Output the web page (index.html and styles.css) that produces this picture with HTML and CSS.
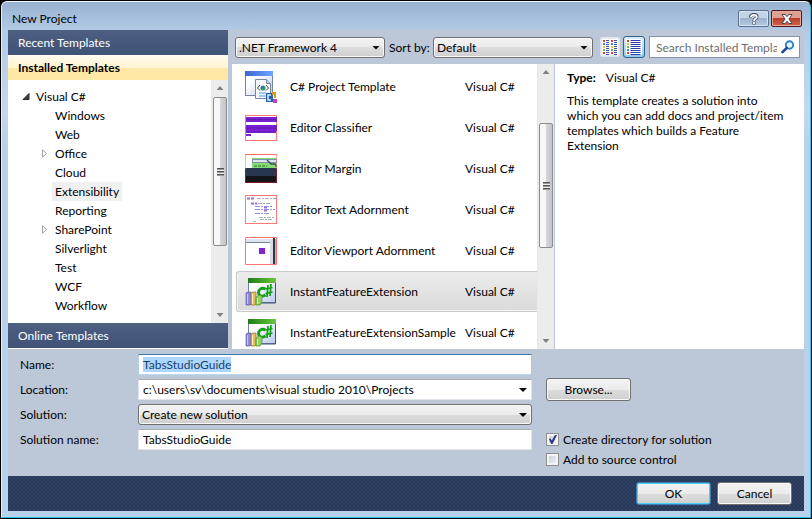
FILE: index.html
```html
<!DOCTYPE html>
<html lang="en">
<head>
<meta charset="utf-8">
<title>New Project</title>
<link rel="stylesheet" href="styles.css">
</head>
<body>
<svg width="0" height="0" class="defs" aria-hidden="true">
  <defs>
    <linearGradient id="sheet" x1="0" y1="0" x2="1" y2="1"><stop offset=".3" stop-color="#fff"/><stop offset="1" stop-color="#b9c9ee"/></linearGradient>
    <linearGradient id="blueBar" x1="0" x2="1"><stop offset="0" stop-color="#3a68cc"/><stop offset="1" stop-color="#6fa5ff"/></linearGradient>
    <linearGradient id="greenBar" x1="0" x2="1"><stop offset="0" stop-color="#1f7a1a"/><stop offset="1" stop-color="#69c83c"/></linearGradient>
    <symbol id="csharp" viewBox="0 0 32 32">
      <rect x="3.500" y="2.500" width="27" height="24" fill="url(#sheet)" stroke="#6f83a6"/>
      <path d="M30.500 3v24H6" fill="none" stroke="#3f5273"/>
      <rect x="3" y="2" width="28" height="5" fill="url(#greenBar)"/>
      <path d="M20.500 13c-4-2-7 .5-7 3.500s3 5 7 2.500" fill="none" stroke="#12a012" stroke-width="2.800"/>
      <path d="M23 9l-1 12M26 8l-1 12M20.500 13l7-1.500M20.500 17.500l7-1.500" fill="none" stroke="#12a012" stroke-width="1.700"/>
      <path d="M1 17l2-1h3v12l-1 1H1z" fill="#8d8be0" stroke="#5655a8" stroke-width=".7"/>
      <path d="M2.500 18v10" stroke="#c5c4fa"/>
      <path d="M6 17l2-1h3v12l-1 1H6z" fill="#e5bd59" stroke="#987126" stroke-width=".7"/>
      <path d="M7.500 18v10" stroke="#ffecb0"/>
      <path d="M11 21l3-2 3 1v6l-2 3h-4z" fill="#91d265" stroke="#488e2d" stroke-width=".7"/>
      <path d="M12.500 22v6" stroke="#d3f5b6"/>
    </symbol>
  </defs>
</svg>
<main class="window">
  <header class="titlebar">
    <h1>New Project</h1>
    <button class="caption" type="button" aria-label="Help"><svg width="12" height="12" viewBox="0 0 12 12"><path d="M2.500 4.500V3.200Q3 1.500 6 1.500t3 2.200Q9 5 7.500 5.600 6 6.200 6 8M6 8.500v3" fill="none" stroke="#40506a" stroke-width="3.200"/><path d="M3 4V3.200Q3.400 1.800 6 1.800t2.800 1.900Q8.800 5 7.500 5.600 6 6.200 6 8M6 9v2" fill="none" stroke="#fff" stroke-width="1.800"/></svg></button>
    <button class="caption close" type="button" aria-label="Close"><svg width="12" height="10" viewBox="0 0 12 10"><path d="M1 .5h3.200L6 2.700 7.800.5H11L8 5l3 4.500H7.800L6 7.300 4.200 9.500H1L4 5z" fill="#fff" stroke="#48454f"/></svg></button>
  </header>

  <div class="client">
    <div class="upper">
      <nav class="side">
        <button class="band" type="button">Recent Templates</button>
        <button class="band current" type="button">Installed Templates</button>
        <div class="treebox">
          <ul class="tree">
            <li class="root"><svg width="7" height="7" viewBox="0 0 7 7"><path d="M6.500.5v6h-6z" fill="#404040" stroke="#262626"/></svg><span>Visual C#</span></li>
            <li><span>Windows</span></li>
            <li><span>Web</span></li>
            <li><svg width="7" height="9" viewBox="0 0 7 9"><path d="M1 .8l4 3.700-4 3.700z" fill="#fff" stroke="#a5a5a5"/></svg><span>Office</span></li>
            <li><span>Cloud</span></li>
            <li><span class="picked">Extensibility</span></li>
            <li><span>Reporting</span></li>
            <li><svg width="7" height="9" viewBox="0 0 7 9"><path d="M1 .8l4 3.700-4 3.700z" fill="#fff" stroke="#a5a5a5"/></svg><span>SharePoint</span></li>
            <li><span>Silverlight</span></li>
            <li><span>Test</span></li>
            <li><span>WCF</span></li>
            <li><span>Workflow</span></li>
          </ul>
          <div class="scroll"><i class="up"></i><i class="thumb tree-thumb"></i><i class="down"></i></div>
        </div>
        <button class="band" type="button">Online Templates</button>
      </nav>

      <section class="browser">
        <div class="toolbar">
          <span class="drop framework"><select aria-label="Framework"><option>.NET Framework 4</option></select></span>
          <label for="sort">Sort by:</label>
          <span class="drop sort"><select id="sort"><option>Default</option></select></span>
          <button class="view" type="button" aria-label="Small icons"><svg width="16" height="16" viewBox="0 0 16 16"><path d="M0 0h7v16H0zM8 0h8v16H8z" fill="#fff"/><g stroke-width="2"><path d="M2 1v2M10 1v2M2 13v2M10 13v2" stroke="#e33b2d"/><path d="M2 4v2M10 4v2" stroke="#4a7fd0"/><path d="M2 7v2M10 7v2" stroke="#e8c825"/><path d="M2 10v2M10 10v2" stroke="#6ab93b"/></g><path d="M5.500 1v15M13.500 1v15" stroke="#3a4eae" stroke-width="3" stroke-dasharray="1 1"/></svg></button>
          <button class="view on" type="button" aria-label="Medium icons"><svg width="16" height="16" viewBox="0 0 16 16"><path d="M0 0h16v16H0z" fill="#fff"/><g stroke-width="2"><path d="M2 1v2M2 13v2" stroke="#e33b2d"/><path d="M2 4v2" stroke="#e8c825"/><path d="M2 7v2" stroke="#6ab93b"/><path d="M2 10v2" stroke="#4a7fd0"/></g><path d="M9.500 1v15" stroke="#2d3fae" stroke-width="10" stroke-dasharray="1 1"/></svg></button>
          <div class="search">
            <input type="text" placeholder="Search Installed Templates" aria-label="Search Installed Templates">
            <svg width="14" height="14" viewBox="0 0 14 14"><circle cx="8.500" cy="5" r="3.700" fill="#e9f5fd" stroke="#2a7fc4" stroke-width="1.900"/><path d="M5.700 8L1.500 12.200" stroke="#23479a" stroke-width="2.600" stroke-linecap="round"/></svg>
          </div>
        </div>
        <div class="panes">
          <ul class="templates">
            <li><svg width="32" height="32" viewBox="0 0 32 32"><rect x=".5" y=".5" width="27" height="24" fill="url(#sheet)" stroke="#7384a3"/><rect width="28" height="5" fill="url(#blueBar)"/><path d="M10.500 8.500h11l4 4v15h-15z" fill="#f7f9fd" stroke="#7886a0"/><path d="M21.500 8.500v4h4" fill="#ccd5e5" stroke="#7886a0"/><path d="M15 14l-2.500 3 2.500 2.500M21 14l2.500 3-2.500 2.500" fill="none" stroke="#444"/><circle cx="18" cy="17" r="2.600" fill="#379b72"/><path d="M16 16.500h3" stroke="#3967d2" stroke-width="2"/><path d="M14 22h7M14 25h7" stroke="#4e91e8"/><path d="M21 22h7v9h-7z" fill="#285fae"/><path d="M26 24h-3v5h3" fill="none" stroke="#d2f0ff" stroke-width="1.500"/><path d="M27 21h4v6h-2v-3h-2z" fill="#d69b19"/><rect x="28" y="28" width="4" height="4" fill="#c23fb8"/></svg><span>C# Project Template</span><span>Visual C#</span></li>
            <li><svg width="32" height="26" viewBox="0 0 32 26"><rect x=".5" y=".5" width="31" height="25" fill="#fff" stroke="#ff7878"/><path d="M1 2h31v5H1zM1 10h31v6H1zM1 16h30v2H1zM1 19h5v2H1z" fill="#7920d2"/><path d="M2 4.500h30M2 13h30M2 17h25" stroke="#5f18ac" stroke-dasharray="5 1 3 1"/></svg><span>Editor Classifier</span><span>Visual C#</span></li>
            <li><svg width="32" height="29" viewBox="0 0 32 29"><path fill="#fff" d="M0 0h32v15H0z"/><path fill="#7fdd72" d="M7 4h25v10H7z"/><path fill="#dce2ed" stroke="#8291a9" d="M7.500 5.500h24v3h-24z"/><path d="M9 12h13" stroke="#347530" stroke-dasharray="3 1"/><path d="M22 6l4 4h4l2 3" fill="none" stroke="#465161" stroke-width="1.500"/><path d="M0 14h32v8H0z" fill="#29364f"/><path d="M0 22h32v7H0z" fill="#131516"/><path d="M0 15V.5h32V15" fill="none" stroke="#ff6969"/><path d="M.5 15v13.500h31V15" fill="none" stroke="#801c29"/></svg><span>Editor Margin</span><span>Visual C#</span></li>
            <li><svg width="32" height="29" viewBox="0 0 32 29"><rect x=".5" y=".5" width="31" height="28" fill="#fff" stroke="#ff7878"/><g opacity=".75"><path d="M2 3.500h8M6 8.500h6M19 12.500h3M19 15.500h3" stroke="#803bcb" stroke-width="2" stroke-dasharray="3 1"/><path d="M12 3.500h19M13 8.500h12M14 22.500h15M15 24.500h13" stroke="#8d929d" stroke-dasharray="4 1 2 1"/><path d="M10 11.500h18M10 14.500h20M10 18.500h15" stroke="#6878d6" stroke-dasharray="5 1 2 1"/></g><path d="M8 26.500h3" stroke="#bbb"/></svg><span>Editor Text Adornment</span><span>Visual C#</span></li>
            <li><svg width="32" height="28" viewBox="0 0 32 28"><path d="M0 0h32v28H0z" fill="#fff"/><path d="M1 2h26v3H1z" fill="#dfe4ef"/><path d="M1 5.500h26" stroke="#78859b"/><path d="M25 2h3v26h-3z" fill="#d7dce6"/><path d="M28 0h2v28h-2z" fill="#29364f"/><path d="M30 2h1v25h-1z" fill="#abb8cc"/><path d="M14 11h6v6h-6z" fill="#8421d5"/><path d="M.5.5h31v27H.5z" fill="none" stroke="#ff7373"/></svg><span>Editor Viewport Adornment</span><span>Visual C#</span></li>
            <li class="selected"><svg width="32" height="32"><use href="#csharp"/></svg><span>InstantFeatureExtension</span><span>Visual C#</span></li>
            <li><svg width="32" height="32"><use href="#csharp"/></svg><span>InstantFeatureExtensionSample</span><span>Visual C#</span></li>
          </ul>
          <div class="scroll"><i class="up"></i><i class="thumb list-thumb"></i><i class="down"></i></div>
          <aside class="detail">
            <p><b>Type:</b><span>Visual C#</span></p>
            <p>This template creates a solution into which you can add docs and project/item templates which builds a Feature Extension</p>
          </aside>
        </div>
      </section>
    </div>

    <form class="fields">
      <label for="name">Name:</label>
      <input class="box focused" id="name" type="text" value="TabsStudioGuide">
      <label for="location">Location:</label>
      <span class="combo"><input class="box" id="location" type="text" value="c:\users\sv\documents\visual studio 2010\Projects"></span>
      <button class="push browse" type="button">Browse...</button>
      <label for="solution">Solution:</label>
      <span class="drop"><select id="solution"><option>Create new solution</option></select></span>
      <label for="solname">Solution name:</label>
      <input class="box" id="solname" type="text" value="TabsStudioGuide">
      <div class="checks">
        <label><input type="checkbox" checked>Create directory for solution</label>
        <label><input type="checkbox">Add to source control</label>
      </div>
    </form>

    <footer class="actions">
      <button class="push ok" type="button">OK</button>
      <button class="push" type="button">Cancel</button>
    </footer>
  </div>
</main>
<script src="app.js"></script>
</body>
</html>
```
FILE: styles.css
```css
* { box-sizing: border-box; }
html, body { height: 100%; }
body, h1, ul, p { margin: 0; padding: 0; }
ul { list-style: none; }
body {
  background: #000;
  padding: 1px;
  font: 12px/15px Lato, "Open Sans", sans-serif;
  color: #000;
}
button, input, select { font: inherit; color: inherit; margin: 0; }
button, select { padding: 0; }
.defs { position: absolute; }

.window {
  display: flex;
  flex-direction: column;
  min-height: 100%;
  padding: 0 6px 6px;
  border: 1px solid #27c5e8;
  border-top-color: #f2f7fc;
  border-left-color: #e2eefa;
  border-radius: 6px 6px 0 0;
  background: linear-gradient(#98b2d1, #b4cbe6 30px, #c2d8ef 110px, #b9d1ea 140px);
}
.titlebar {
  display: flex;
  align-items: center;
  gap: 2px;
  height: 28px;
  padding: 5px 2px 0 4px;
}
.titlebar h1 { flex: 1; font-size: 12px; font-weight: 400; }
.caption {
  display: flex;
  align-items: center;
  justify-content: center;
  width: 31px;
  height: 17px;
  border: 1px solid #5c6f8c;
  border-radius: 2px;
  background: linear-gradient(#c5d5e9 45%, #9db2cc 50%, #b5cae3);
  box-shadow: inset 0 0 0 1px #d6e3f2;
}
.caption.close {
  border-color: #521820;
  background: linear-gradient(#dfa092 45%, #b93e2d 50%, #d2684f);
  box-shadow: inset 0 0 0 1px #e5a99c;
}

.client {
  flex: 1;
  display: flex;
  flex-direction: column;
  background: #bcc7d8;
}
.upper { display: flex; gap: 4px; height: 319px; }

.side { display: flex; flex-direction: column; width: 220px; border-bottom: 1px solid #fff; }
.band {
  flex: none;
  height: 25px;
  padding-left: 10px;
  border: 0;
  background: linear-gradient(#4d6082, #3f5277);
  color: #fff;
  text-align: left;
}
.band.current {
  background: linear-gradient(#fffbf0, #fff3cf 50%, #ffe8a6 55%);
  color: #000;
  font-weight: 700;
}
.treebox { flex: 1; display: flex; background: #fff; }
.tree { flex: 1; padding-top: 7px; }
.tree li { display: flex; align-items: center; height: 19px; padding-left: 44px; }
.tree svg { width: 14px; margin-left: -14px; }
.tree li.root { padding-left: 25px; }
.tree span { padding: 2px 3px; }
.tree .picked { background: #f0f0f0; }

.scroll {
  display: flex;
  flex-direction: column;
  width: 17px;
  padding: 6px 1px;
  border-left: 1px solid #e9e9e9;
  background: #ececec;
}
.up, .down { align-self: center; width: 7px; height: 4px; background: #808080; }
.up { clip-path: polygon(50% 0, 100% 100%, 0 100%); }
.down { margin-top: auto; clip-path: polygon(0 0, 100% 0, 50% 100%); }
.thumb {
  display: flex;
  align-items: center;
  justify-content: center;
  border: 1px solid #8c8c8c;
  border-radius: 2px;
  background: linear-gradient(90deg, #f8f8f8 45%, #d4d4d8 55%, #c4c4ca);
}
.thumb::after {
  content: "";
  width: 7px;
  height: 8px;
  background: repeating-linear-gradient(#555 0 1px, #999 1px 2px, #eee 2px 3px);
}
.tree-thumb { height: 149px; margin-top: 7px; }
.list-thumb { height: 125px; margin-top: 49px; }

.browser { flex: 1; min-width: 0; display: flex; flex-direction: column; }
.toolbar { display: flex; align-items: center; height: 34px; padding: 0 4px 0 3px; }
.toolbar label { width: 48px; padding-left: 4px; white-space: nowrap; }
.drop, .combo { position: relative; display: block; }
.framework { width: 150px; }
.sort { width: 160px; margin-right: 7px; }
.drop select {
  display: block;
  width: 100%;
  height: 21px;
  padding-left: 3px;
  appearance: none;
  border: 1px solid #707070;
  border-radius: 3px;
  background: linear-gradient(#f3f3f3, #ebebeb 50%, #dddddd 50%, #cfcfcf);
  box-shadow: inset 0 0 0 1px #f8f8f8;
}
.drop::after, .combo::after {
  content: "";
  position: absolute;
  right: 5px;
  top: 9px;
  width: 8px;
  height: 4px;
  background: #000;
  clip-path: polygon(0 0, 100% 0, 50% 100%);
}
.view {
  display: flex;
  align-items: center;
  justify-content: center;
  width: 20px;
  height: 20px;
  margin-right: 3px;
  border: 1px solid #dce3ed;
  border-radius: 2px;
  background: #e8edf4;
}
.view.on {
  width: 22px;
  height: 22px;
  margin-right: 4px;
  border-color: #2c628b;
  border-radius: 3px;
  background: linear-gradient(#d9eefa, #8fc9ea);
}
.search {
  flex: 1;
  min-width: 0;
  display: flex;
  align-items: center;
  height: 22px;
  padding: 0 4px 0 6px;
  border: 1px solid #8593a9;
  background: #fff;
}
.search input { flex: 1; min-width: 0; padding: 0; margin-right: 4px; border: 0; outline: 0; background: none; }
.search input::placeholder { color: #6d6d6d; opacity: 1; }

.panes { flex: 1; display: flex; min-height: 0; background: #fff; }
.templates { width: 305px; padding: 2px 0 0 4px; overflow: hidden; }
.templates li {
  display: grid;
  grid-template-columns: 45px 175px 1fr;
  align-items: center;
  height: 41px;
  padding-left: 9px;
  white-space: nowrap;
}
.templates .selected {
  padding-left: 8px;
  border: 1px solid #c9c9c9;
  border-right: 0;
  border-radius: 3px 0 0 3px;
  background: linear-gradient(#ececec, #dadada);
  box-shadow: inset 1px -1px #f3f3f3;
}
.detail { flex: 1; padding: 6px 16px 6px 12px; border-left: 1px solid #bcc7d8; }
.detail span { margin-left: 10px; }
.detail p + p { margin-top: 8px; }

.fields {
  display: grid;
  grid-template-columns: 118px 394px 1fr;
  grid-auto-rows: 21px;
  gap: 4px 0;
  align-items: center;
  padding: 5px 12px 0;
  flex: 1;
  align-content: start;
}
.fields > label { grid-column: 1; }
.box {
  display: block;
  width: 100%;
  height: 21px;
  padding: 0 4px;
  border: 1px solid #e2e3ea;
  border-top-color: #abadb3;
  background: #fff;
  outline: 0;
}
.box.focused { border-color: #3d7bad #a4c9e3 #b7d9ed #b5cfe7; }
.box::selection { background: #add6ff; color: #1c3f66; }
.push {
  width: 75px;
  height: 23px;
  border: 1px solid #707070;
  border-radius: 3px;
  background: linear-gradient(#f3f3f3, #ebebeb 50%, #dddddd 50%, #cfcfcf);
  box-shadow: inset 0 0 0 1px #fafafa;
}
.push.browse { width: 85px; margin-left: 14px; }
.push.ok { border-color: #3c7fb1; box-shadow: inset 0 0 0 1px #45d0f5; }
.checks {
  display: flex;
  flex-direction: column;
  gap: 5px;
  align-self: start;
  margin: 3px 0 0 14px;
}
.checks label { display: flex; align-items: center; gap: 4px; height: 15px; }
.checks input {
  display: grid;
  place-items: center;
  width: 13px;
  height: 13px;
  appearance: none;
  border: 1px solid #8e8f8f;
  background: linear-gradient(135deg, #c3c9d2, #f6f6f6);
  box-shadow: inset 0 0 0 2px #f4f4f4;
}
.checks input:checked::after {
  content: "";
  width: 9px;
  height: 9px;
  background: #2e3a87;
  clip-path: polygon(8% 42%, 30% 42%, 42% 62%, 78% 0, 100% 0, 50% 100%, 36% 100%);
}
.actions {
  display: flex;
  justify-content: flex-end;
  align-items: center;
  gap: 6px;
  height: 35px;
  padding-right: 12px;
  background:
    radial-gradient(#30426a 1px, transparent 1px) 0 0 / 4px 4px,
    radial-gradient(#2e4064 1px, transparent 1px) 2px 2px / 4px 4px,
    #283753;
}
```
FILE: app.js
```js
document.getElementById("name").select();
```
